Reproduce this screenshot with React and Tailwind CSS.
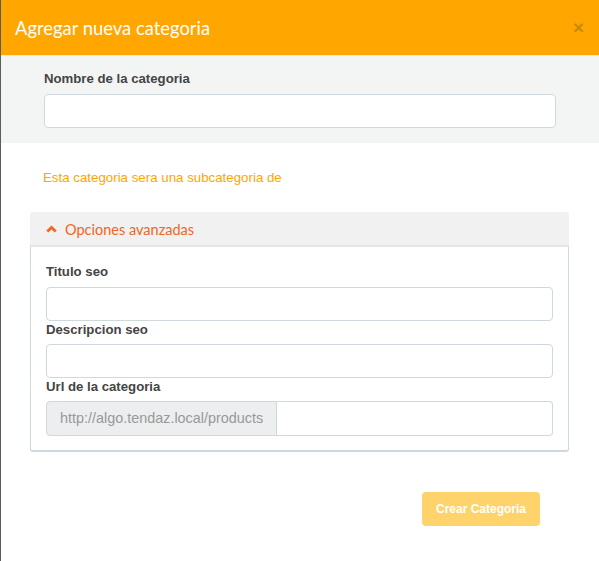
export default function App() {
  return (
    <div className="w-[599px] h-[561px] bg-white border-l border-[#5c5c5c] overflow-hidden font-['Liberation_Sans',Arial,sans-serif]">
      <div className="h-[56px] bg-[#ffa600] flex items-center justify-between pl-[14px] pr-[15px] border-b border-[#e6e9ea]">
        <h1 className="font-['Lato',sans-serif] text-white text-[18.4px] leading-none pt-[2px]">Agregar nueva categoria</h1>
        <span className="font-['Liberation_Sans',Arial,sans-serif] text-[#c98a00] font-bold text-[19px] leading-none">×</span>
      </div>
      <div className="bg-[#f3f5f5] h-[87px] pl-[43px] pr-[43px] pt-[16px]">
        <label className="block text-[13.2px] font-bold text-[#444] leading-none">Nombre de la categoria</label>
        <div className="mt-[9px] h-[34px] bg-white border border-[#cfd8dc] rounded-[4px]"></div>
      </div>
      <div className="pl-[42px] pt-[28px] text-[13.3px] text-[#ffa600] leading-none">Esta categoria sera una subcategoria de</div>
      <div className="mx-[29px] mt-[28px] w-[539px]">
        <div className="h-[35px] bg-[#f1f1f1] border-b-2 border-[#e3e5e5] rounded-t-[3px] flex items-center pl-[16px] gap-[8px] text-[#f26522]">
          <svg width="11" height="8" viewBox="0 0 11 8" fill="none"><path d="M1.3 6.6 L5.5 2.4 L9.7 6.6" stroke="#f26522" strokeWidth="2.8" /></svg>
          <span className="font-['Lato',sans-serif] text-[14.5px] leading-none pt-[2px]">Opciones avanzadas</span>
        </div>
        <div className="border border-t-0 border-[#cfd8dc] border-b-2 rounded-b-[3px] px-[15px] pt-[18px] pb-[14px]">
          <label className="block text-[13.2px] font-bold text-[#444] leading-none">Titulo seo</label>
          <div className="mt-[8px] h-[34px] bg-white border border-[#cfd8dc] rounded-[4px]"></div>
          <label className="block text-[13.2px] font-bold text-[#444] leading-none mt-[2px]">Descripcion seo</label>
          <div className="mt-[8px] h-[34px] bg-white border border-[#cfd8dc] rounded-[4px]"></div>
          <label className="block text-[13.2px] font-bold text-[#444] leading-none mt-[2px]">Url de la categoria</label>
          <div className="mt-[8px] h-[35px] flex">
            <div className="w-[231px] bg-[#eceeef] border border-[#cfd8dc] rounded-l-[4px] flex items-center pl-[13px] text-[14.4px] text-[#999]">http://algo.tendaz.local/products</div>
            <div className="flex-1 bg-white border border-l-0 border-[#cfd8dc] rounded-r-[4px]"></div>
          </div>
        </div>
      </div>
      <div className="flex justify-end pr-[59px] pt-[40px]">
        <button className="w-[118px] h-[34px] bg-[#ffd36b] text-white text-[12px] font-bold rounded-[4px]">Crear Categoria</button>
      </div>
    </div>
  );
}
